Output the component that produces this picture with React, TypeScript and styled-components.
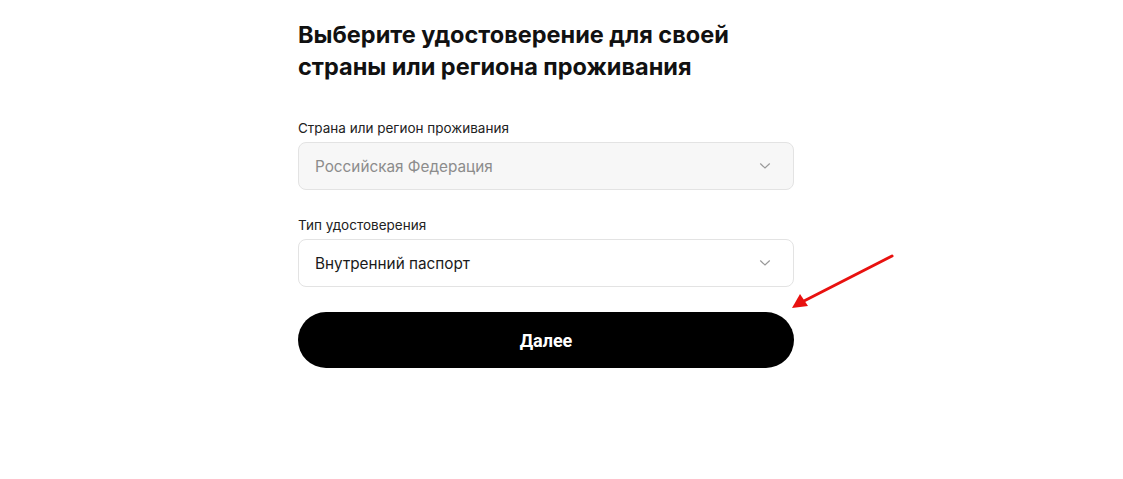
import styled, { createGlobalStyle } from 'styled-components';

const GlobalStyle = createGlobalStyle`
    html, body {
        margin: 0;
        padding: 0;
        background: #fff;
        font-family: Inter, "Noto Sans", sans-serif;
        color: #111;
    }
`;

export default function App() {
    return (
        <>
            <GlobalStyle />
            <Page>
                <Form>
                    <Title>
                        Выберите удостоверение для своей
                        <br />
                        страны или региона проживания
                    </Title>
                    <Field $first>
                        <Label>Страна или регион проживания</Label>
                        <Select $disabled>
                            <span>Российская Федерация</span>
                            <Chevron />
                        </Select>
                    </Field>
                    <Field>
                        <Label>Тип удостоверения</Label>
                        <Select>
                            <span>Внутренний паспорт</span>
                            <Chevron />
                        </Select>
                    </Field>
                    <Button>Далее</Button>
                    <Arrow width="110" height="60" viewBox="0 0 110 60">
                        <line x1="104" y1="4" x2="14" y2="50" stroke="#e8110f" strokeWidth="3" strokeLinecap="round" />
                        <polygon points="4,56 12,42 20,54" fill="#e8110f" />
                    </Arrow>
                </Form>
            </Page>
        </>
    );
}

function Chevron() {
    return (
        <ChevronIcon width="12" height="8" viewBox="0 0 12 8">
            <path d="M1.5 1.8 L6 6 L10.5 1.8" fill="none" stroke="#999" strokeWidth="1.2" strokeLinecap="round" />
        </ChevronIcon>
    );
}

const Page = styled.div`
    width: 1123px;
    height: 479px;
    padding: 19px 0 0 298px;
    box-sizing: border-box;
`;

const Form = styled.div`
    position: relative;
    width: 496px;
    display: flex;
    flex-direction: column;
`;

const Title = styled.h1`
    margin: 0;
    font-size: 23.5px;
    line-height: 32px;
    font-weight: 700;
    color: #111;
`;

const Field = styled.div<{ $first?: boolean }>`
    display: flex;
    flex-direction: column;
    margin-top: ${(p) => (p.$first ? '36px' : '26px')};
`;

const Label = styled.div`
    font-size: 13.5px;
    line-height: 18px;
    color: #222;
    margin-bottom: 5px;
`;

const Select = styled.div<{ $disabled?: boolean }>`
    height: 48px;
    box-sizing: border-box;
    border: 1px solid #e3e3e3;
    border-radius: 8px;
    background: ${(p) => (p.$disabled ? '#f7f7f7' : '#fff')};
    color: ${(p) => (p.$disabled ? '#8c8c8c' : '#1a1a1a')};
    display: flex;
    align-items: center;
    justify-content: space-between;
    padding: 0 22px 0 16px;
    font-size: 15.3px;
`;

const ChevronIcon = styled.svg`
    display: block;
`;

const Button = styled.button`
    margin-top: 25px;
    height: 56px;
    border: none;
    border-radius: 28px;
    background: #000;
    color: #fff;
    font-family: Roboto, "Liberation Sans", sans-serif;
    font-size: 18px;
    font-weight: 700;
    cursor: pointer;
`;

const Arrow = styled.svg`
    position: absolute;
    left: 490px;
    top: 233px;
`;
